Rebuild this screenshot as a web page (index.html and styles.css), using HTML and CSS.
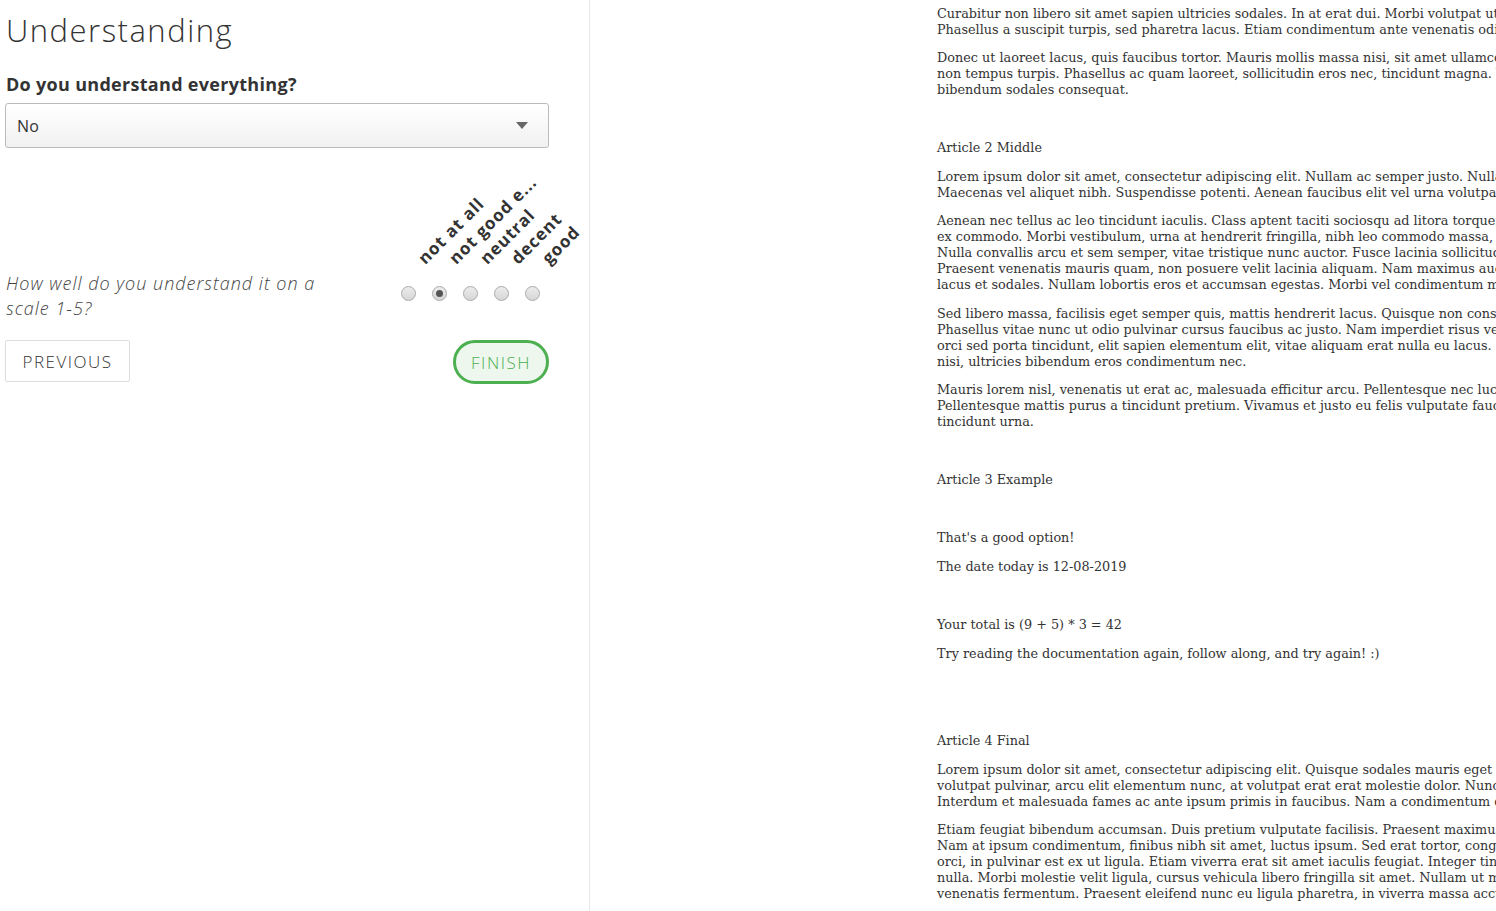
FILE: index.html
```html
<!DOCTYPE html>
<html lang="en">
<head>
<meta charset="utf-8">
<title>Understanding</title>
<link rel="stylesheet" href="styles.css">
</head>
<body>
<div class="page">
  <aside class="survey">
    <h1 class="title">Understanding</h1>
    <div class="question">Do you understand everything?</div>
    <div class="select">
      <span class="select-value">No</span>
      <svg class="select-arrow" width="12" height="7" viewBox="0 0 12 7"><path d="M0 0H12L6 7Z" fill="#666"/></svg>
    </div>
    <div class="rating">
      <div class="rating-text">How well do you understand it on a scale 1-5?</div>
      <div class="options">
        <div class="opt"><div class="opt-head"><span class="opt-label">not at all</span></div><span class="radio"></span></div>
        <div class="opt"><div class="opt-head"><span class="opt-label">not good e...</span></div><span class="radio checked"></span></div>
        <div class="opt"><div class="opt-head"><span class="opt-label">neutral</span></div><span class="radio"></span></div>
        <div class="opt"><div class="opt-head"><span class="opt-label">decent</span></div><span class="radio"></span></div>
        <div class="opt"><div class="opt-head"><span class="opt-label">good</span></div><span class="radio"></span></div>
      </div>
    </div>
    <div class="nav">
      <button class="btn btn-prev">PREVIOUS</button>
      <button class="btn btn-finish">FINISH</button>
    </div>
  </aside>
  <main class="doc">
    <p>Curabitur non libero sit amet sapien ultricies sodales. In at erat dui. Morbi volutpat ut nisi vitae finibus.<br>Phasellus a suscipit turpis, sed pharetra lacus. Etiam condimentum ante venenatis odio ultrices.</p>
    <p>Donec ut laoreet lacus, quis faucibus tortor. Mauris mollis massa nisi, sit amet ullamcorper nibh luctus<br>non tempus turpis. Phasellus ac quam laoreet, sollicitudin eros nec, tincidunt magna. Vestibulum eget<br>bibendum sodales consequat.</p>
    <p class="short gap2">Article 2 Middle</p>
    <p>Lorem ipsum dolor sit amet, consectetur adipiscing elit. Nullam ac semper justo. Nullam at neque leo.<br>Maecenas vel aliquet nibh. Suspendisse potenti. Aenean faucibus elit vel urna volutpat porta.</p>
    <p>Aenean nec tellus ac leo tincidunt iaculis. Class aptent taciti sociosqu ad litora torquent per conubia nostra,<br>ex commodo. Morbi vestibulum, urna at hendrerit fringilla, nibh leo commodo massa, quis porta nisl<br>Nulla convallis arcu et sem semper, vitae tristique nunc auctor. Fusce lacinia sollicitudin lorem.<br>Praesent venenatis mauris quam, non posuere velit lacinia aliquam. Nam maximus auctor<br>lacus et sodales. Nullam lobortis eros et accumsan egestas. Morbi vel condimentum metus.</p>
    <p>Sed libero massa, facilisis eget semper quis, mattis hendrerit lacus. Quisque non consequat ipsum.<br>Phasellus vitae nunc ut odio pulvinar cursus faucibus ac justo. Nam imperdiet risus vel<br>orci sed porta tincidunt, elit sapien elementum elit, vitae aliquam erat nulla eu lacus. Donec<br>nisi, ultricies bibendum eros condimentum nec.</p>
    <p>Mauris lorem nisl, venenatis ut erat ac, malesuada efficitur arcu. Pellentesque nec luctus dui.<br>Pellentesque mattis purus a tincidunt pretium. Vivamus et justo eu felis vulputate faucibus vel<br>tincidunt urna.</p>
    <p class="short gap2">Article 3 Example</p>
    <p class="short gap2">That's a good option!</p>
    <p class="short">The date today is 12-08-2019</p>
    <p class="short gap2">Your total is (9 + 5) * 3 = 42</p>
    <p class="short">Try reading the documentation again, follow along, and try again! :)</p>
    <p class="short gap3">Article 4 Final</p>
    <p>Lorem ipsum dolor sit amet, consectetur adipiscing elit. Quisque sodales mauris eget ipsum faucibus,<br>volutpat pulvinar, arcu elit elementum nunc, at volutpat erat erat molestie dolor. Nunc vitae<br>Interdum et malesuada fames ac ante ipsum primis in faucibus. Nam a condimentum dui.</p>
    <p>Etiam feugiat bibendum accumsan. Duis pretium vulputate facilisis. Praesent maximus ligula.<br>Nam at ipsum condimentum, finibus nibh sit amet, luctus ipsum. Sed erat tortor, congue vel<br>orci, in pulvinar est ex ut ligula. Etiam viverra erat sit amet iaculis feugiat. Integer tincidunt<br>nulla. Morbi molestie velit ligula, cursus vehicula libero fringilla sit amet. Nullam ut mi<br>venenatis fermentum. Praesent eleifend nunc eu ligula pharetra, in viverra massa accumsan.</p>
  </main>
</div>
</body>
</html>
```
FILE: styles.css
```css
html, body {
  margin: 0;
  padding: 0;
  background: #fff;
  overflow: hidden;
}
.page {
  display: flex;
  height: 911px;
  overflow: hidden;
}
.survey {
  flex: 0 0 auto;
  width: 544px;
  padding: 0 40px 0 5px;
  border-right: 1px solid #e6e6e6;
  font-family: "Open Sans", "Noto Sans", sans-serif;
  color: #333;
}
.title {
  margin: 8px 0 0 1px;
  font-size: 31px;
  line-height: 44px;
  font-weight: 300;
  letter-spacing: 1.5px;
  color: #333;
}
.question {
  margin: 20px 0 0 1px;
  font-size: 18px;
  font-weight: 700;
  line-height: 24px;
  letter-spacing: 0.3px;
  color: #333;
}
.select {
  margin-top: 7px;
  height: 43px;
  border: 1px solid #bbb;
  border-radius: 3px;
  background: linear-gradient(#fff, #f1f1f1);
  display: flex;
  align-items: center;
  justify-content: space-between;
  padding: 0 20px 0 11px;
}
.select-value {
  font-size: 16px;
  letter-spacing: 0.3px;
  color: #333;
}
.rating {
  display: flex;
  justify-content: space-between;
  align-items: flex-start;
  margin-top: 17px;
}
.rating-text {
  width: 320px;
  margin: 106px 0 0 1px;
  font-size: 18px;
  line-height: 25px;
  letter-spacing: 1px;
  font-style: italic;
  font-weight: 300;
  color: #444;
}
.options {
  display: flex;
  padding-right: 1px;
}
.opt {
  width: 31px;
  display: flex;
  flex-direction: column;
  align-items: center;
}
.opt-head {
  height: 103px;
  width: 31px;
  display: flex;
  align-items: flex-end;
}
.opt-label {
  display: block;
  flex: 0 0 auto;
  margin-left: 35px;
  width: 140px;
  height: 21px;
  line-height: 21px;
  font-size: 17px;
  font-weight: 700;
  letter-spacing: 0.9px;
  color: #333;
  white-space: nowrap;
  overflow: hidden;
  text-overflow: ellipsis;
  transform-origin: 0 100%;
  transform: rotate(-45deg);
}
.radio {
  margin-top: 18px;
  width: 13px;
  height: 13px;
  border: 1px solid #aaa;
  border-radius: 50%;
  background: linear-gradient(#ececec, #d6d6d6);
  display: flex;
  align-items: center;
  justify-content: center;
}
.radio.checked::after {
  content: "";
  width: 7px;
  height: 7px;
  border-radius: 50%;
  background: #555;
}
.nav {
  display: flex;
  justify-content: space-between;
  align-items: flex-start;
  margin-top: 19px;
}
.btn {
  font-family: "Open Sans", "Noto Sans", sans-serif;
  font-size: 17px;
  font-weight: 300;
  letter-spacing: 1.5px;
  cursor: pointer;
  padding: 0;
}
.btn-prev {
  width: 125px;
  height: 42px;
  background: #fff;
  border: 1px solid #ddd;
  border-radius: 2px;
  color: #333;
}
.btn-finish {
  width: 96px;
  height: 44px;
  background: #eef7ee;
  border: 3px solid #4caf50;
  border-radius: 22px;
  color: #4caf50;
}
.doc {
  flex: 0 0 auto;
  padding: 6px 0 0 347px;
  font-family: "DejaVu Serif", serif;
  font-size: 12.8px;
  color: #333;
  white-space: nowrap;
}
.doc p {
  margin: 0 0 12.2px;
  line-height: 16px;
}
.doc .short {
  margin-bottom: 13px;
}
.doc .gap2 {
  margin-top: 42px;
}
.doc .gap3 {
  margin-top: 71px;
}
```
